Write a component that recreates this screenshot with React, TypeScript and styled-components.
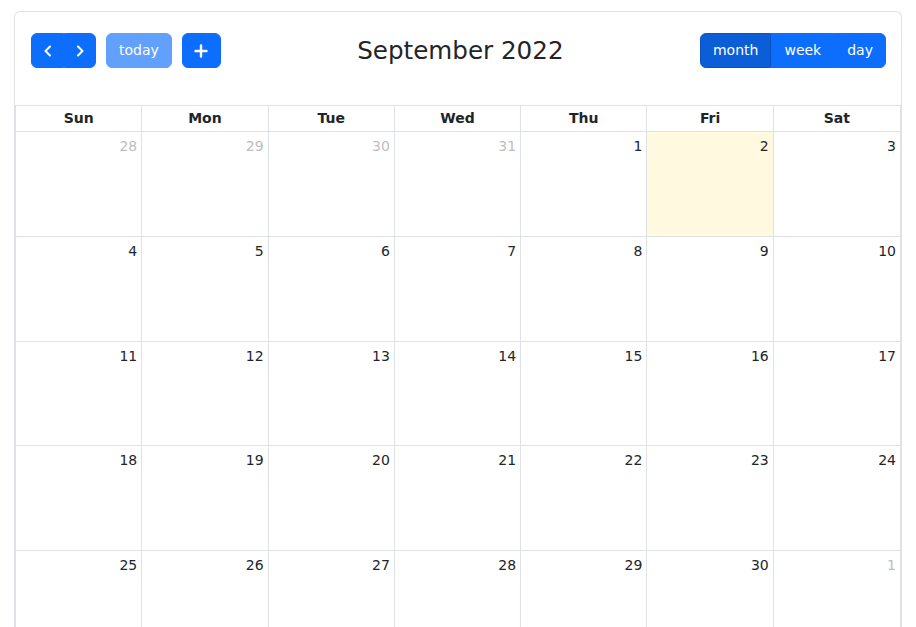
import React from "react";
import styled, { createGlobalStyle } from "styled-components";

const Global = createGlobalStyle`
  html, body { margin: 0; padding: 0; background: #fff; }
  body { font-family: "DejaVu Sans", Verdana, sans-serif; font-size: 14px; color: #212529; }
  * { box-sizing: border-box; }
`;

const Page = styled.div`
  padding: 11px 14px 0 14px;
  width: 916px;
  height: 627px;
  overflow: hidden;
`;

const Card = styled.div`
  border: 1px solid #dee2e6;
  border-bottom: none;
  border-radius: 6px 6px 0 0;
  width: 888px;
`;

const Toolbar = styled.div`
  display: flex;
  align-items: center;
  justify-content: space-between;
  padding: 21px 15px 0 16px;
  margin-bottom: 37px;
`;

const Chunk = styled.div`
  display: flex;
  align-items: center;
  gap: 10px;
`;

const Title = styled.h2`
  margin: 0;
  font-weight: 400;
  font-size: 24.6px;
  line-height: 1.2;
  color: #212529;
  white-space: nowrap;
  padding-top: 1px;
`;

const Group = styled.div`
  display: inline-flex;
  & > button { border-radius: 0; }
  & > button:first-child { border-radius: 6px 0 0 6px; }
  & > button:last-child { border-radius: 0 6px 6px 0; }
`;

const Btn = styled.button<{ $active?: boolean; $disabled?: boolean; $w?: number }>`
  font-family: "DejaVu Sans", Verdana, sans-serif;
  font-size: 14px;
  line-height: 21px;
  height: 35px;
  padding: ${(p) => (p.$w ? "6px 0" : "6px 12px")};
  border: 1px solid ${(p) => (p.$active ? "#0a53be" : "#0d6efd")};
  background: ${(p) => (p.$active ? "#0b5ed7" : "#0d6efd")};
  color: #fff;
  border-radius: 6px;
  display: inline-flex;
  align-items: center;
  justify-content: center;
  opacity: ${(p) => (p.$disabled ? 0.65 : 1)};
  width: ${(p) => (p.$w ? `${p.$w}px` : "auto")};
  cursor: pointer;
  & > svg { flex-shrink: 0; }
`;

const Grid = styled.div`
  display: grid;
  grid-template-columns: repeat(7, 1fr);
  border-top: 1px solid #dee2e6;
  border-left: 1px solid #dee2e6;
  border-right: 1px solid #dee2e6;
`;

const HeadCell = styled.div`
  font-weight: 700;
  text-align: center;
  padding: 2px 4px;
  line-height: 21px;
  border-right: 1px solid #dee2e6;
  border-bottom: 1px solid #dee2e6;
  &:nth-child(7n) { border-right: none; }
`;

const DayCell = styled.div<{ $today?: boolean }>`
  height: 104.8px;
  border-right: 1px solid #dee2e6;
  border-bottom: 1px solid #dee2e6;
  background: ${(p) => (p.$today ? "rgba(255, 220, 40, 0.15)" : "transparent")};
  &:nth-child(7n) { border-right: none; }
  display: flex;
  justify-content: flex-end;
  align-items: flex-start;
`;

const DayNum = styled.span<{ $other?: boolean }>`
  padding: 4px;
  line-height: 21px;
  color: #212529;
  opacity: ${(p) => (p.$other ? 0.3 : 1)};
`;

const Chevron = ({ dir }: { dir: "l" | "r" }) => (
  <svg width="14" height="14" viewBox="0 0 14 14" fill="none">
    <polyline
      points={dir === "l" ? "9,2.5 4.5,7 9,11.5" : "5,2.5 9.5,7 5,11.5"}
      stroke="#fff"
      strokeWidth="2"
      strokeLinecap="round"
      strokeLinejoin="round"
    />
  </svg>
);

const Plus = () => (
  <svg width="14" height="14" viewBox="0 0 14 14" fill="none">
    <path d="M7 1.5v11M1.5 7h11" stroke="#fff" strokeWidth="2.4" strokeLinecap="round" />
  </svg>
);

const days = ["Sun", "Mon", "Tue", "Wed", "Thu", "Fri", "Sat"];

const cells: { n: number; other?: boolean; today?: boolean }[] = [
  { n: 28, other: true },
  { n: 29, other: true },
  { n: 30, other: true },
  { n: 31, other: true },
  ...Array.from({ length: 30 }, (_, i) => ({ n: i + 1, today: i + 1 === 2 })),
  { n: 1, other: true },
];

export default function App() {
  return (
    <>
      <Global />
      <Page>
        <Card>
          <Toolbar>
            <Chunk>
              <Group>
                <Btn $w={33} aria-label="prev">
                  <Chevron dir="l" />
                </Btn>
                <Btn $w={32} aria-label="next">
                  <Chevron dir="r" />
                </Btn>
              </Group>
              <Btn $disabled>today</Btn>
              <Btn $w={39} aria-label="add">
                <Plus />
              </Btn>
            </Chunk>
            <Title>September 2022</Title>
            <Chunk>
              <Group>
                <Btn $active>month</Btn>
                <Btn>week</Btn>
                <Btn>day</Btn>
              </Group>
            </Chunk>
          </Toolbar>
          <Grid>
            {days.map((d) => (
              <HeadCell key={d}>{d}</HeadCell>
            ))}
            {cells.map((c, i) => (
              <DayCell key={i} $today={c.today}>
                <DayNum $other={c.other}>{c.n}</DayNum>
              </DayCell>
            ))}
          </Grid>
        </Card>
      </Page>
    </>
  );
}
